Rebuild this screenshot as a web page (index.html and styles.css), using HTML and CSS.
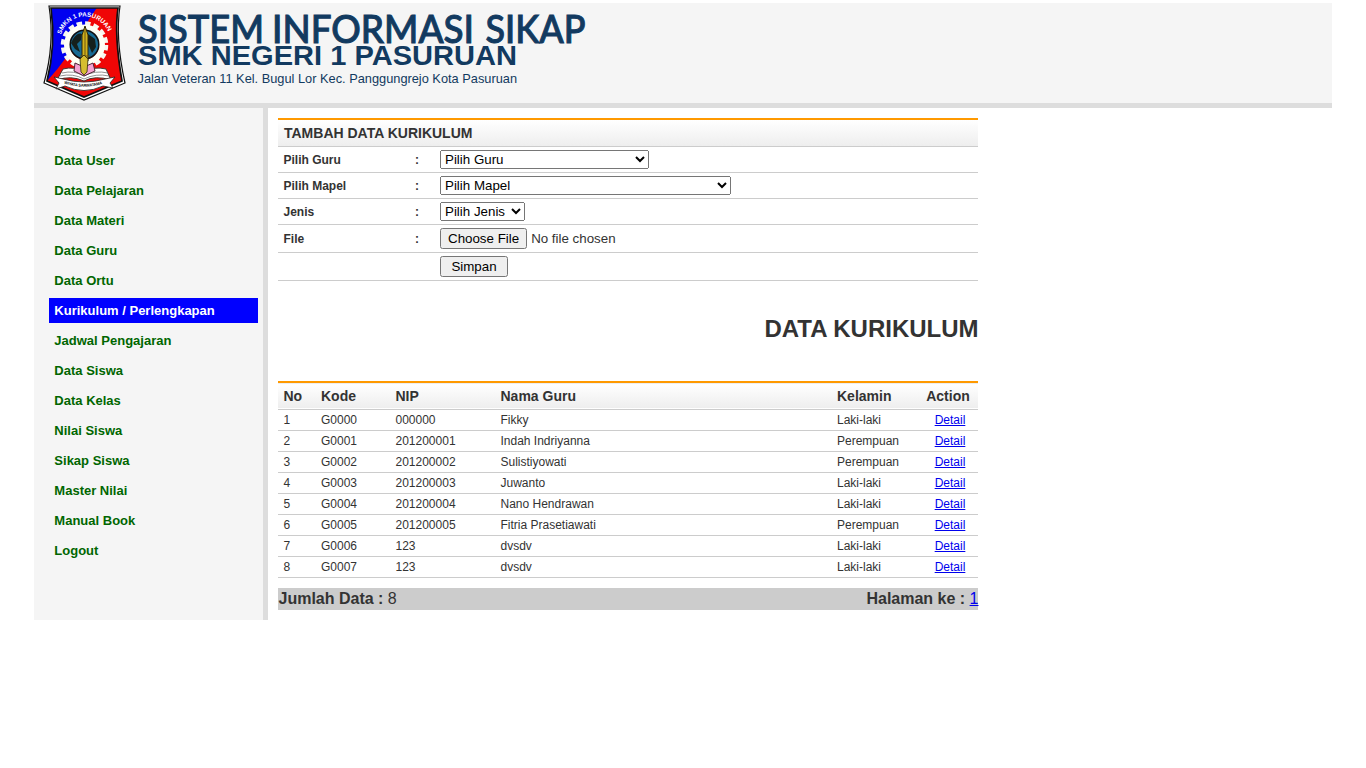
FILE: index.html
```html
<!DOCTYPE html>
<html lang="id">
<head>
<meta charset="utf-8">
<title>Sistem Informasi Sikap</title>
<link rel="stylesheet" href="styles.css">
</head>
<body>
<div class="page">
<header class="header">
<svg class="emblem" width="100" height="100" viewBox="0 3 100 100">
  <defs>
    <clipPath id="shield"><path d="M17 8H84Q81 35 88 81L50 97L13 81Q22 45 17 8Z"/></clipPath>
    <path id="nameArc" d="M27 34.500A25 25 0 0 1 75 34.500"/>
    <path id="motto" d="M30 83.500Q50 90 70 83.500"/>
  </defs>
  <path d="M15 6H86Q81 38 91 83L50 100L10 83Q21 44 15 6Z" fill="#fff" stroke="#111" stroke-width="1.2"/>
  <g clip-path="url(#shield)">
    <path d="M0 0H100V110H0Z" fill="#f00606"/>
    <path d="M0 0H69Q58 13 49 30Q34 58 14 80L0 90Z" fill="#0000f0"/>
  </g>
  <path d="M17 8H84Q80 35 88 81L50 97L13 81Q22 45 17 8Z" fill="none" stroke="#111" stroke-width="1.7"/>
  <circle cx="50.500" cy="45" r="21.500" fill="none" stroke="#f7f7ef" stroke-width="4.500" stroke-dasharray="5.400 3.040"/>
  <circle cx="50.500" cy="45" r="17.500" fill="none" stroke="#fffff5" stroke-width="6"/>
  <circle cx="50.500" cy="44.500" r="14.300" fill="#176a92" stroke="#111" stroke-width="1.500"/>
  <path d="M39 39q5-7 9-5l-1 6-4 4 3 8-5-3-4-6zM54 34l7 5 1 8-4 6-3-7-3-5z" fill="#15201c"/>
  <path d="M48 61V35l3-9 3 9v26z" fill="#d2b31d" stroke="#2c260b" stroke-width="1"/>
  <path d="M51 28v33M46 56h10" stroke="#6b5713" stroke-width="1"/>
  <path d="M29 69Q40 66 50 72Q60 66 72 69L77 80Q61 75 50 81Q37 75 23 80Z" fill="#fff" stroke="#43352f" stroke-width="1"/>
  <path d="M28 73Q40 70 50 76Q61 70 74 73M26 76Q39 73 50 79Q62 73 75 76" fill="none" stroke="#777" stroke-width=".8"/>
  <path d="M41 63L50 67L59 63L61 71L50 76L40 71Z" fill="#f3a2d1" stroke="#4d2332" stroke-width="1"/>
  <path d="M46 59L50 55L54 59L53 72L50 75L47 72Z" fill="#d6bd2f" stroke="#2e290b" stroke-width=".8"/>
  <path d="M20 77L29 79Q50 85 71 79L81 77L76 83L79 88L69 86Q50 95 31 86L22 89L25 83Z" fill="#fff" stroke="#24201d" stroke-width=".8"/>
  <text class="emblem-name"><textPath href="#nameArc" textLength="61" lengthAdjust="spacing">SMKN 1 PASURUAN</textPath></text>
  <text class="emblem-motto"><textPath href="#motto" textLength="39" lengthAdjust="spacing">WIYATA SARWATAMA</textPath></text>
</svg>
<svg class="brand" width="500" height="100" viewBox="100 3 500 100">
  <text class="brand-title" x="138" y="42.500" textLength="126" lengthAdjust="spacingAndGlyphs">SISTEM</text>
  <text class="brand-title" x="272" y="42.500" textLength="202" lengthAdjust="spacingAndGlyphs">INFORMASI</text>
  <text class="brand-title" x="485.500" y="42.500" textLength="100" lengthAdjust="spacingAndGlyphs">SIKAP</text>
  <text class="brand-school" x="138" y="65" textLength="379" lengthAdjust="spacingAndGlyphs">SMK NEGERI 1 PASURUAN</text>
  <text class="brand-address" x="137.500" y="83" textLength="379.500" lengthAdjust="spacingAndGlyphs">Jalan Veteran 11 Kel. Bugul Lor Kec. Panggungrejo Kota Pasuruan</text>
</svg>
</header>
<div class="body">
<nav class="menu">
  <a>Home</a><a>Data User</a><a>Data Pelajaran</a><a>Data Materi</a><a>Data Guru</a><a>Data Ortu</a><a class="active">Kurikulum / Perlengkapan</a><a>Jadwal Pengajaran</a><a>Data Siswa</a><a>Data Kelas</a><a>Nilai Siswa</a><a>Sikap Siswa</a><a>Master Nilai</a><a>Manual Book</a><a>Logout</a>
</nav>
<main class="content">
<form class="form">
  <div class="bar form-title">TAMBAH DATA KURIKULUM</div>
  <div class="field"><label>Pilih Guru</label><b>:</b><select class="guru"><option>Pilih Guru</option></select></div>
  <div class="field"><label>Pilih Mapel</label><b>:</b><select class="mapel"><option>Pilih Mapel</option></select></div>
  <div class="field"><label>Jenis</label><b>:</b><select class="jenis"><option>Pilih Jenis</option></select></div>
  <div class="field tall"><label>File</label><b>:</b><input type="file"></div>
  <div class="field tall"><span></span><span></span><button type="button">Simpan</button></div>
</form>
<h2>DATA KURIKULUM</h2>
<table>
<thead><tr class="bar"><th class="c-no">No</th><th class="c-kode">Kode</th><th class="c-nip">NIP</th><th>Nama Guru</th><th class="c-sex">Kelamin</th><th class="c-act">Action</th></tr></thead>
<tbody>
<tr><td>1</td><td>G0000</td><td>000000</td><td>Fikky</td><td>Laki-laki</td><td><a href="#">Detail</a></td></tr>
<tr><td>2</td><td>G0001</td><td>201200001</td><td>Indah Indriyanna</td><td>Perempuan</td><td><a href="#">Detail</a></td></tr>
<tr><td>3</td><td>G0002</td><td>201200002</td><td>Sulistiyowati</td><td>Perempuan</td><td><a href="#">Detail</a></td></tr>
<tr><td>4</td><td>G0003</td><td>201200003</td><td>Juwanto</td><td>Laki-laki</td><td><a href="#">Detail</a></td></tr>
<tr><td>5</td><td>G0004</td><td>201200004</td><td>Nano Hendrawan</td><td>Laki-laki</td><td><a href="#">Detail</a></td></tr>
<tr><td>6</td><td>G0005</td><td>201200005</td><td>Fitria Prasetiawati</td><td>Perempuan</td><td><a href="#">Detail</a></td></tr>
<tr><td>7</td><td>G0006</td><td>123</td><td>dvsdv</td><td>Laki-laki</td><td><a href="#">Detail</a></td></tr>
<tr><td>8</td><td>G0007</td><td>123</td><td>dvsdv</td><td>Laki-laki</td><td><a href="#">Detail</a></td></tr>
</tbody>
</table>
<div class="summary"><span><b>Jumlah Data :</b> 8</span><span><b>Halaman ke :</b> <a href="#">1</a></span></div>
</main>
</div>
</div>
</body>
</html>
```
FILE: styles.css
```css
* { box-sizing: border-box; }
body { margin: 0; background: #fff; color: #333; font-family: "Liberation Sans", Arial, sans-serif; }
.page { width: 1298px; margin: 3px auto 0; }
.header { display: flex; height: 105px; background: #f5f5f5; border-bottom: 5px solid #ddd; }
.emblem { flex: none; margin-right: -34px; }
.brand { flex: none; overflow: visible; }
.emblem-name { font: bold 6.3px "Liberation Sans", sans-serif; fill: #fff; }
.emblem-motto { font: bold 4px "Liberation Sans", sans-serif; fill: #111; }
.brand-title { font: 500 39px Lato, sans-serif; fill: #123a60; stroke: #123a60; stroke-width: 1px; }
.brand-school { font: bold 28.5px "Liberation Sans", sans-serif; fill: #123a60; }
.brand-address { font: 13px "Liberation Sans", sans-serif; fill: #123a60; }
.body { display: flex; }
.menu { display: flex; flex-direction: column; gap: 5px; width: 234px; height: 512px; padding: 10px 5px 0 15px; background: #f5f5f5; border-right: 5px solid #ddd; }
.menu a { height: 25px; padding-left: 5.35px; color: #060; font-weight: bold; font-size: 13px; line-height: 25px; }
.menu .active { background: #00f; color: #fff; }
.content { width: 700px; margin: 10px 0 0 10px; }
.bar { background: linear-gradient(#fff, #eee); border-top: 2px solid #f90; border-bottom: 1px solid #ccc; }
.form-title { height: 29px; padding-left: 6px; font-weight: bold; font-size: 14px; line-height: 26px; }
.field { display: grid; grid-template-columns: 131.5px 25px auto; justify-content: start; align-items: center; height: 26px; padding-left: 5.5px; border-bottom: 1px solid #ccc; font-size: 12px; }
.field.tall { height: 28px; }
.field label { font-weight: bold; }
select { height: 19px; margin: 0; font: 13.333px "Liberation Sans", Arial, sans-serif; }
.guru { width: 209px; }
.mapel { width: 291px; }
.jenis { width: 85px; }
input, button { font: 13.333px "Liberation Sans", Arial, sans-serif; }
button { width: 68px; height: 21px; padding: 0; }
h2 { margin: 33px -0.6px 0 0; height: 67px; font-size: 24px; line-height: 30px; text-align: right; }
table { width: 700px; border-collapse: collapse; table-layout: fixed; }
th, td { padding: 0 0 0 5.5px; text-align: left; }
th:nth-child(2), td:nth-child(2), th:nth-child(5), td:nth-child(5) { padding-left: 6px; }
th { height: 27px; font-size: 14px; }
td { height: 21px; border-bottom: 1px solid #ccc; font-size: 12px; }
.c-no { width: 37px; }
.c-kode { width: 75px; }
.c-nip { width: 105px; }
.c-sex { width: 87px; }
.c-act { width: 60px; }
th:last-child, td:last-child { padding: 0; text-align: center; }
td:last-child { padding-left: 4px; }
a[href] { color: #00e; }
.summary { display: flex; justify-content: space-between; height: 22px; margin: 10px -0.5px 0 0; background: linear-gradient(#ccc, #ccc) no-repeat 0 0 / 700px 22px; padding-left: 0.5px; font-size: 16px; line-height: 21px; }
```
